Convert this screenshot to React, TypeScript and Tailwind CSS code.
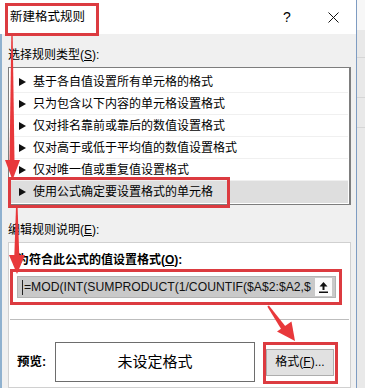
import React from 'react';

const rules = [
  '基于各自值设置所有单元格的格式',
  '只为包含以下内容的单元格设置格式',
  '仅对排名靠前或靠后的数值设置格式',
  '仅对高于或低于平均值的数值设置格式',
  '仅对唯一值或重复值设置格式',
  '使用公式确定要设置格式的单元格',
];

const Tri = () => (
  <svg width="7" height="8" viewBox="0 0 7 8" className="shrink-0">
    <path d="M0 0 L7 4 L0 8 Z" fill="#111" />
  </svg>
);

const Annotations = () => (
  <div className="pointer-events-none absolute inset-0">
    <div className="absolute left-[5px] top-[3px] h-[33px] w-[94px] border-[3px] border-[#dc3b40]" />
    <div className="absolute left-[8px] top-[177px] h-[31px] w-[222px] border-[3px] border-[#dc3b40]" />
    <div className="absolute left-[10px] top-[269px] h-[36px] w-[332px] border-[3px] border-[#dc3b40]" />
    <div className="absolute left-[263px] top-[342px] h-[42px] w-[75px] border-[3px] border-[#dc3b40]" />
    <svg className="absolute left-0 top-0" width="365" height="388" viewBox="0 0 365 388">
      <g fill="#e8383b">
        <polygon points="11.3,36 12.7,36 14.5,161 9.5,161" />
        <polygon points="5,160 20,160 12.5,180" />
        <polygon points="16,207 17.6,207 19.3,256 14.3,256" />
        <polygon points="9,255 25,255 17,274" />
        <polygon points="267.3,306.6 268.9,305.4 285.6,326.6 281.4,329.4" />
        <polygon points="277,331.5 291.5,321.5 295,341" />
      </g>
    </svg>
  </div>
);

export default function App() {
  return (
    <div className="relative flex h-[388px] w-[365px] overflow-hidden bg-[#ececec] font-['Liberation_Sans','Noto_Sans_CJK_SC',sans-serif] text-[12px] text-black">
      <div className="flex w-[357px] shrink-0 flex-col border-r border-[#7e9cc2]">
        {/* title bar */}
        <div className="flex h-[34px] shrink-0 items-center bg-white">
          <span className="pl-[10px] text-[12.5px]">新建格式规则</span>
          <div className="ml-auto flex h-full w-[46px] items-center justify-center text-[14px]">?</div>
          <div className="flex h-full w-[46px] items-center justify-center">
            <svg width="11" height="11" viewBox="0 0 11 11">
              <path d="M0.5 0.5 L10.5 10.5 M10.5 0.5 L0.5 10.5" stroke="#111" strokeWidth="1" />
            </svg>
          </div>
        </div>

        {/* body */}
        <div className="flex flex-1 flex-col border-l-2 border-[#8fb1cf] bg-[#f0f0f0] pl-[6px]">
          <div className="mt-[13px] leading-[16px]">
            选择规则类型(<span className="underline">S</span>):
          </div>
          <div className="mt-[4px] w-[343px] border border-r-2 border-[#7d7d7d] bg-white px-px pb-px pt-[3px]">
            {rules.map((r, i) => (
              <div
                key={i}
                className={`flex h-[22px] items-center gap-[7px] border-b pl-[9px] ${
                  i === 5 ? 'border-transparent bg-[#dedede]' : 'border-[#f0f0f0]'
                }`}
              >
                <Tri />
                <span className="leading-none">{r}</span>
              </div>
            ))}
          </div>

          <div className="mt-[17px] leading-[16px]">
            编辑规则说明(<span className="underline">E</span>):
          </div>

          <div className="mt-[4px] flex w-[343px] flex-1 flex-col border border-[#d0d0d0] bg-white">
            <div className="px-[8px] pt-[9px]">
              <div className="font-bold leading-[16px]">
                为符合此公式的值设置格式(<span className="underline">O</span>):
              </div>
              <div className="mt-[8px] flex h-[22px] w-[319px] border border-[#b3b3b3] bg-[#c9c9c9]">
                <div className="flex flex-1 items-center whitespace-nowrap pl-[4px] font-['Liberation_Sans',sans-serif] text-[12.2px] leading-none text-[#111]">
                  <span className="mr-px h-[15px] w-px bg-[#222]" />
                  =MOD(INT(SUMPRODUCT(1/COUNTIF($A$2:$A2,$
                </div>
                <div className="flex w-[19px] items-center justify-center border border-[#c9c9c9] bg-[#fbfbfb]">
                  <svg width="9" height="11" viewBox="0 0 9 11">
                    <path d="M4.5 0 L8.5 4.5 L5.5 4.5 L5.5 8 L3.5 8 L3.5 4.5 L0.5 4.5 Z" fill="#111" />
                    <rect x="0" y="9.5" width="9" height="1.5" fill="#111" />
                  </svg>
                </div>
                <div className="w-[2px] bg-[#c9c9c9]" />
              </div>
            </div>

            <div className="mx-px mt-[21px] h-px bg-[#bdbdbd]" />

            <div className="mt-[22px] flex items-center pl-[8px]">
              <span className="w-[38px] text-[12.5px] font-bold">预览:</span>
              <div className="flex h-[40px] w-[200px] items-center justify-center border border-[#6d6d6d] text-[15px]">
                未设定格式
              </div>
              <div className="ml-[11px] flex h-[27px] w-[68px] items-center justify-center border border-[#adadad] bg-[#e1e1e1]">
                格式(<span className="underline">F</span>)...
              </div>
            </div>
          </div>
        </div>
      </div>

      {/* spreadsheet behind the dialog */}
      <div className="flex flex-1 flex-col bg-[#e9e9e9]">
        <div className="h-[30px] bg-[#f7f7f7]" />
        <div className="h-[28px] border-b border-[#d6d6d6]" />
        <div className="h-[40px] border-b border-[#d6d6d6]" />
        <div className="h-[30px] border-b border-[#d6d6d6]" />
        <div className="flex-1" />
      </div>

      <Annotations />
    </div>
  );
}
